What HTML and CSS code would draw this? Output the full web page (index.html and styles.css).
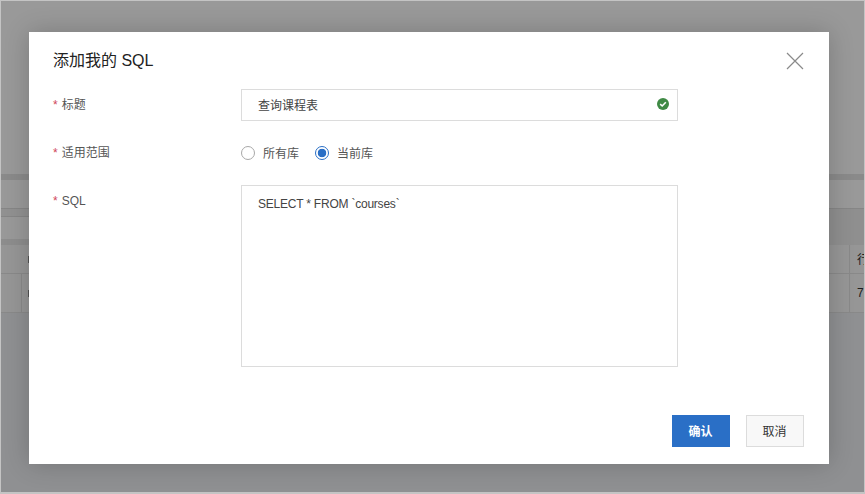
FILE: index.html
```html
<!DOCTYPE html>
<html lang="zh">
<head>
<meta charset="utf-8">
<title>添加我的 SQL</title>
<link rel="stylesheet" href="styles.css">
</head>
<body>
<div class="page">
  <div class="bg">
    <div class="bg-space"></div>
    <div class="bg-band"></div>
    <div class="bg-tabs"></div>
    <div class="bg-mid">
      <div class="bg-mid-left">
        <div class="bg-sub"></div>
        <div class="bg-tool"></div>
        <div class="bg-strip"></div>
      </div>
    </div>
    <div class="bg-row head"><span class="c1"><b class="peek"></b></span><span class="c2">行</span></div>
    <div class="bg-row body"><span class="c1 ruled"><b class="peek"></b></span><span class="c2">7</span></div>
    <div class="bg-rest"></div>
  </div>
  <div class="mask"></div>
  <div class="dialog">
    <div class="title">添加我的 SQL</div>
    <svg class="close" width="18" height="18" viewBox="0 0 18 18"><path d="M1 1 17 17M17 1 1 17" fill="none" stroke="#8a8a8a" stroke-width="1.2"/></svg>
    <div class="form">
      <div class="row r1">
        <div class="label"><i>*</i>标题</div>
        <div class="input">查询课程表
          <svg class="ok" width="12" height="12" viewBox="0 0 12 12"><circle cx="6" cy="6" r="6" fill="#3f8a45"/><path d="M3.2 6.2 5.2 8 8.8 4.2" fill="none" stroke="#fff" stroke-width="1.6"/></svg>
        </div>
      </div>
      <div class="row r2">
        <div class="label"><i>*</i>适用范围</div>
        <div class="radios">
          <span class="radio"><b class="dot"></b><span class="rt">所有库</span></span>
          <span class="radio on"><b class="dot"></b><span class="rt">当前库</span></span>
        </div>
      </div>
      <div class="row r3">
        <div class="label"><i>*</i>SQL</div>
        <div class="area">SELECT * FROM `courses`</div>
      </div>
    </div>
    <div class="foot">
      <button class="btn primary">确认</button>
      <button class="btn">取消</button>
    </div>
  </div>
</div>
</body>
</html>
```
FILE: styles.css
```css
* { box-sizing: border-box; }
html, body { margin: 0; height: 100%; }
body {
  background: #c4c4c4;
  padding: 1px 1px 2px 1px;
  font-family: "Liberation Sans", "Noto Sans CJK SC", sans-serif;
  color: #333;
  overflow: hidden;
}
.page { position: relative; height: 100%; overflow: hidden; background: #fff; }
.bg { display: flex; flex-direction: column; height: 100%; }
.bg-space { height: 173px; }
.bg-band { height: 6px; background: #e6e6e6; }
.bg-tabs { height: 28px; }
.bg-mid { height: 37px; background: #eeeeee; border-top: 1px solid #e0e0e0; }
.bg-mid-left { width: 100px; height: 100%; display: flex; flex-direction: column; background: #fff; }
.bg-sub { height: 8px; background: #f2f2f2; border-bottom: 1px solid #e0e0e0; }
.bg-tool { flex: 1; }
.bg-strip { height: 6px; background: #ececec; }
.bg-row { display: flex; justify-content: space-between; border-bottom: 1px solid #e4e4e4; font-size: 12px; background: #fbfbfb; flex: none; }
.bg-row.head { height: 29px; align-items: center; }
.bg-row.head .c2 { padding-bottom: 2px; }
.bg-row.body { height: 39px; align-items: center; }
.c1 { width: 28px; height: 100%; display: flex; align-items: center; justify-content: flex-end; }
.c1.ruled { background: linear-gradient(#e4e4e4, #e4e4e4) 20px 0 / 1px 100% no-repeat; }
.peek { width: 1px; height: 7px; background: #8a8a8a; }
.c2 { width: 15px; height: 100%; padding-left: 7px; border-left: 1px solid #e4e4e4; display: flex; align-items: center; white-space: nowrap; overflow: hidden; color: #333; }
.bg-rest { flex: 1; background: #eff1f3; }
.mask { position: absolute; inset: 0; background: rgba(0, 0, 0, .4); }
.dialog {
  position: absolute; left: 28px; top: 31px; width: 800px; height: 432px;
  background: #fff; box-shadow: 0 0 24px rgba(0, 0, 0, .2);
  padding: 20px 25px 17px 24px; display: flex; flex-direction: column;
}
.title { font-size: 16px; line-height: 18px; color: #222; }
.close { position: absolute; right: 25px; top: 20px; }
.form { flex: 1; padding-top: 19px; display: flex; flex-direction: column; }
.row { display: flex; font-size: 12px; }
.label { width: 188px; line-height: 32px; color: #555; flex: none; }
.label i { font-style: normal; color: #d0465a; margin-right: 4px; font-size: 12px; }
.r2 { margin-top: 16px; height: 32px; }
.r3 { margin-top: 16px; }
.input {
  position: relative; width: 437px; height: 32px; border: 1px solid #dcdcdc;
  padding-left: 16px; line-height: 32px; color: #444;
}
.ok { position: absolute; right: 8px; top: 8px; }
.radios { display: flex; align-items: center; gap: 16px; }
.radio { display: flex; align-items: center; gap: 8px; color: #555; }
.rt { margin-top: -2px; }
.dot { width: 14px; height: 14px; border: 1px solid #a8a8a8; border-radius: 50%; background: #fff; display: block; }
.on .dot { border-color: #2a6fc6; background: radial-gradient(circle, #2a6fc6 0 4px, #fff 4.6px); }
.area {
  width: 437px; height: 182px; border: 1px solid #dcdcdc;
  padding: 10px 16px; line-height: 16px; color: #444; letter-spacing: -.22px;
}
.foot { display: flex; justify-content: flex-end; gap: 16px; }
.btn {
  width: 58px; height: 32px; border: 1px solid #dcdcdc; background: #f8f8f8;
  font: inherit; font-size: 12px; color: #333; padding: 0 1px 2px 0;
}
.btn.primary { background: #2a6fc6; border-color: #2a6fc6; color: #fff; font-weight: bold; }
```
